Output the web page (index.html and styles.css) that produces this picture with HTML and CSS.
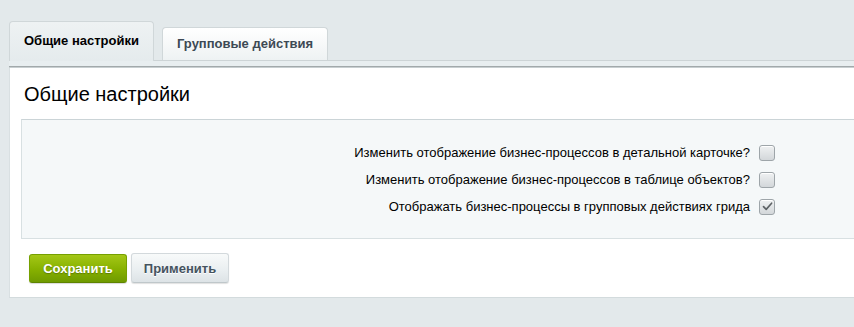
FILE: index.html
```html
<!DOCTYPE html>
<html lang="ru">
<head>
<meta charset="utf-8">
<title>Настройки</title>
<link rel="stylesheet" href="styles.css">
</head>
<body>
<div class="page">
  <h1 class="page-title">Модуль (документооборот) универсальные процессы</h1>
  <div class="tabs">
    <div class="tab tab-active">Общие настройки</div>
    <div class="tab tab-idle">Групповые действия</div>
  </div>
  <div class="tab-strip"></div>
  <div class="panel">
    <h2 class="panel-heading">Общие настройки</h2>
    <div class="options">
      <div class="opt-row">
        <label class="opt-label" for="c1">Изменить отображение бизнес-процессов в детальной карточке?</label>
        <span class="opt-cell"><span class="chk" id="c1"></span></span>
      </div>
      <div class="opt-row">
        <label class="opt-label" for="c2">Изменить отображение бизнес-процессов в таблице объектов?</label>
        <span class="opt-cell"><span class="chk" id="c2"></span></span>
      </div>
      <div class="opt-row">
        <label class="opt-label" for="c3">Отображать бизнес-процессы в групповых действиях грида</label>
        <span class="opt-cell"><span class="chk chk-on" id="c3"><svg viewBox="0 0 15 15" width="15" height="15"><path d="M3.5 7.6 L6.2 10.4 L11.6 4.2" fill="none" stroke="#5d6265" stroke-width="1.6" stroke-linecap="round" stroke-linejoin="round"/></svg></span></span>
      </div>
    </div>
    <div class="actions">
      <button class="btn btn-save">Сохранить</button>
      <button class="btn btn-apply">Применить</button>
    </div>
  </div>
</div>
</body>
</html>
```

FILE: styles.css
```css
html, body {
  margin: 0;
  padding: 0;
}
body {
  background: #e3e9eb;
  font-family: "Liberation Sans", Arial, sans-serif;
  overflow: hidden;
  height: 327px;
}
.page {
  padding-left: 9px;
}
.page-title {
  margin: -28px 0 0 0;
  padding-left: 12px;
  height: 30px;
  font-size: 24px;
  line-height: 28px;
  font-weight: bold;
  color: #1a2533;
  white-space: nowrap;
  overflow: hidden;
}
.tabs {
  display: flex;
  align-items: flex-end;
  gap: 8px;
  margin-top: 19px;
  border-bottom: 1px solid #cdd4d6;
  height: 39px;
}
.tab {
  box-sizing: border-box;
  font-size: 13px;
  font-weight: bold;
  padding: 0 14px;
  border: 1px solid #d0d7d9;
  border-bottom: none;
  border-radius: 4px 4px 0 0;
  white-space: nowrap;
}
.tab-active {
  width: 145px;
  height: 40px;
  margin-bottom: -1px;
  position: relative;
  background: linear-gradient(#eef2f3, #e5ebed);
  color: #000;
  padding-top: 11px;
  text-align: center;
}
.tab-idle {
  width: 166px;
  height: 33px;
  background: linear-gradient(#ffffff, #eef2f3);
  color: #3d4954;
  padding-top: 8px;
  text-align: center;
}
.tab-strip {
  height: 5px;
  background: #e8eef0;
  border-bottom: 1px solid #a2a9ab;
  box-shadow: 0 1px 0 #c8cfd1;
}
.panel {
  background: #fff;
  border-left: 1px solid #d9e0e2;
  border-bottom: 1px solid #d3dbdd;
  height: 230px;
  box-sizing: border-box;
  margin-top: 1px;
  padding-top: 14px;
}
.panel-heading {
  margin: 0;
  padding-left: 14px;
  font-size: 20px;
  line-height: 24px;
  font-weight: normal;
  color: #000;
}
.options {
  margin: 13px 0 0 11px;
  background: #f5f8f9;
  border: 1px solid #d8e0e2;
  border-top-color: #cbd4d7;
  border-right: none;
  padding: 19px 0 20px;
  height: 120px;
  box-sizing: border-box;
}
.opt-row {
  display: flex;
  align-items: center;
  height: 27px;
}
.opt-label {
  width: 728px;
  text-align: right;
  font-size: 13px;
  color: #000;
  white-space: nowrap;
}
.opt-cell {
  display: flex;
  padding-left: 9px;
}
.chk {
  box-sizing: border-box;
  width: 16px;
  height: 16px;
  border: 1px solid #9ea5a9;
  border-radius: 3px;
  background: linear-gradient(#eff1f2, #d3d7da);
  box-shadow: inset 0 1px 0 #ffffff;
  display: flex;
  align-items: center;
  justify-content: center;
  overflow: hidden;
}
.chk svg {
  display: block;
  flex: none;
}
.actions {
  display: flex;
  align-items: flex-end;
  gap: 4px;
  padding: 14px 0 0 19px;
}
.btn {
  box-sizing: border-box;
  width: 98px;
  font-family: "Liberation Sans", Arial, sans-serif;
  font-size: 13px;
  font-weight: bold;
  border-radius: 3px;
  padding: 0;
  cursor: pointer;
}
.btn-save {
  height: 29px;
  color: #fff;
  background: linear-gradient(#a4c716, #86b000 55%, #6f9a00);
  border: 1px solid #76a000;
  border-bottom-color: #5e8400;
  text-shadow: 0 1px 1px rgba(60, 80, 0, 0.5);
  box-shadow: 0 1px 1px rgba(0, 0, 0, 0.15);
}
.btn-apply {
  height: 30px;
  color: #45535e;
  background: linear-gradient(#f8fafa, #e9eef0 60%, #dde3e6);
  border: 1px solid #d3d9dc;
  border-bottom-color: #bfc7ca;
  box-shadow: 0 1px 1px rgba(0, 0, 0, 0.12);
  text-shadow: 0 1px 0 #fff;
}
```
